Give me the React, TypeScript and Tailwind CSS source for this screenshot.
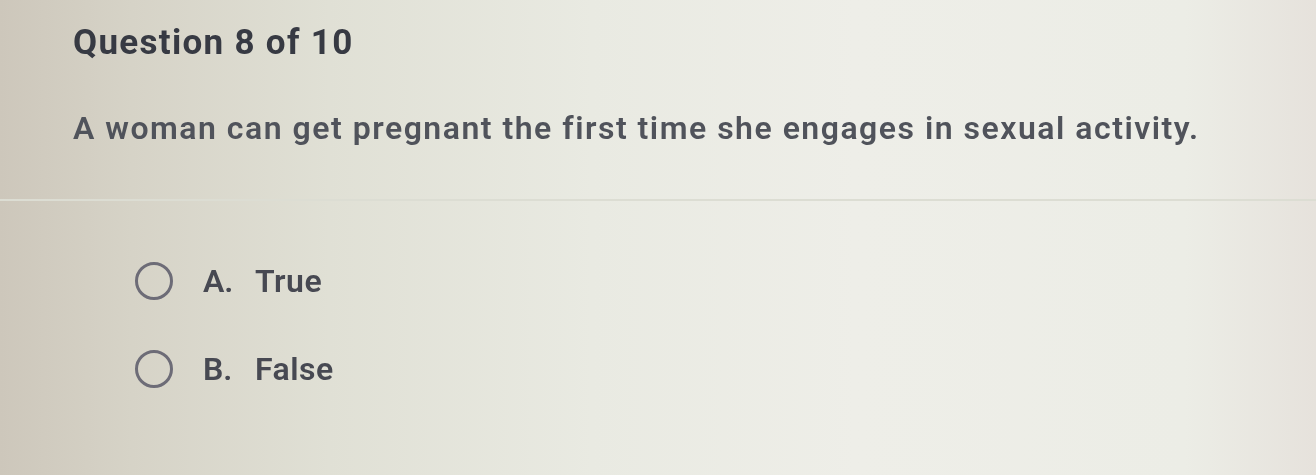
export default function App() {
  const options = [
    { letter: "A.", label: "True" },
    { letter: "B.", label: "False" },
  ];

  return (
    <div
      className="w-[1316px] h-[475px] overflow-hidden bg-[linear-gradient(90deg,#cdc7bb_0%,#d6d3c7_10%,#e0e0d5_25%,#e9eae2_45%,#eeeee8_65%,#ecede6_90%,#e6e2dc_100%)]"
      style={{ fontFamily: "Roboto, 'Liberation Sans', Arial, sans-serif" }}
    >
      <div className="blur-[0.7px]">
        <div className="px-[73px] pt-[23px]">
          <h1 className="text-[35px] leading-[40px] font-bold tracking-[1.3px] text-[#373a43]">
            Question 8 of 10
          </h1>
          <p className="mt-[45px] text-[32px] leading-[40px] font-semibold tracking-[1.5px] text-[#50535b]">
            A woman can get pregnant the first time she engages in sexual activity.
          </p>
        </div>
        <div className="mt-[51px] h-[2px] bg-[#dcddd3]" />
        <div className="pl-[135px] pt-[60px] flex flex-col gap-[48px]">
          {options.map((o) => (
            <label key={o.letter} className="flex items-center h-[40px]">
              <span className="w-[38px] h-[38px] rounded-full border-[3px] border-[#6d6c77]" />
              <span className="ml-[30px] w-[52px] text-[32px] leading-[40px] font-semibold text-[#474952]">
                {o.letter}
              </span>
              <span className="text-[32px] leading-[40px] font-semibold tracking-[0.5px] text-[#474952]">
                {o.label}
              </span>
            </label>
          ))}
        </div>
      </div>
    </div>
  );
}
